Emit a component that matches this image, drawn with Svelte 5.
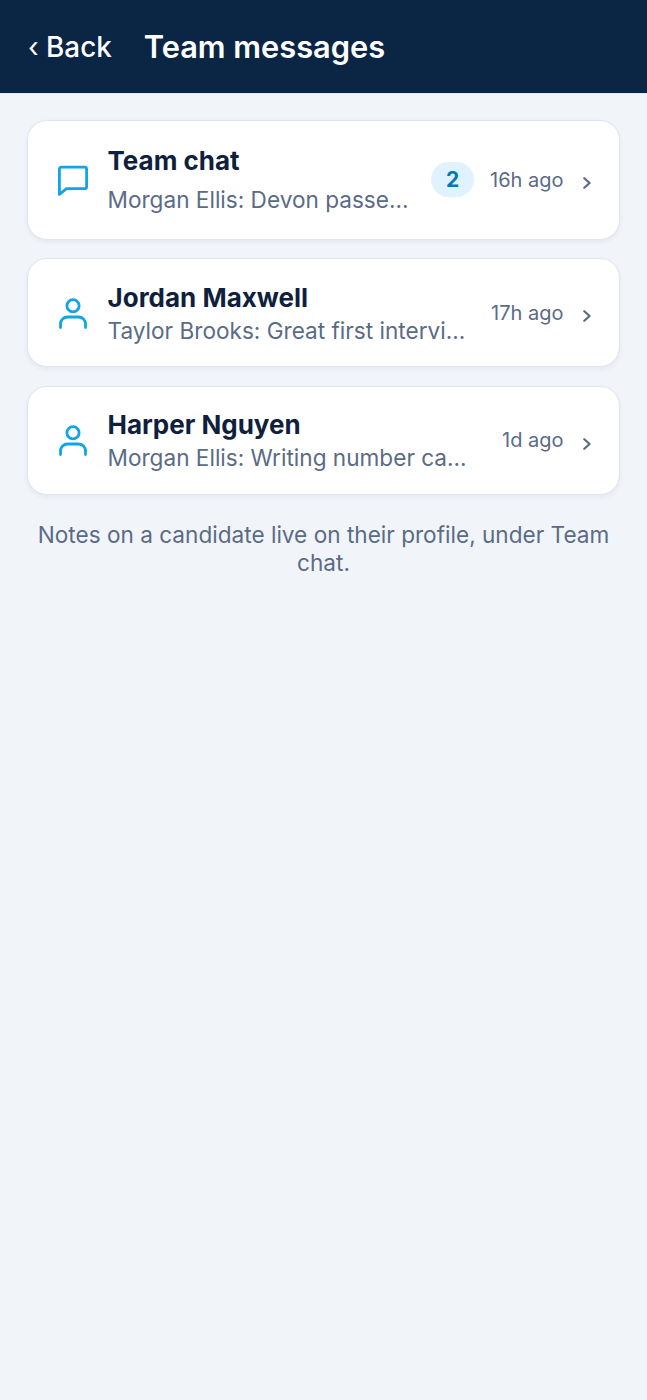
<script>
  const threads = [
    { id: 1, icon: 'chat', name: 'Team chat', preview: 'Morgan Ellis: Devon passed the phone screen', unread: 2, time: '16h ago' },
    { id: 2, icon: 'person', name: 'Jordan Maxwell', preview: 'Taylor Brooks: Great first interview today', unread: 0, time: '17h ago' },
    { id: 3, icon: 'person', name: 'Harper Nguyen', preview: 'Morgan Ellis: Writing number came back high', unread: 0, time: '1d ago' }
  ];
</script>

<div class="screen">
  <header>
    <span class="back"><span class="caret">‹</span> Back</span>
    <h1>Team messages</h1>
  </header>

  <main>
    {#each threads as t (t.id)}
      <div class="card" class:tall={t.unread > 0}>
        <span class="icon">
          {#if t.icon === 'chat'}
            <svg width="32" height="32" viewBox="0 0 32 32" fill="none" stroke="#0ea5e9" stroke-width="2.8" stroke-linejoin="round" stroke-linecap="round">
              <path d="M2.4 5.1a2 2 0 0 1 2-2h23.2a2 2 0 0 1 2 2v17.6a2 2 0 0 1-2 2H9.5l-7.1 5.6z" />
            </svg>
          {:else}
            <svg width="32" height="32" viewBox="0 0 32 32" fill="none" stroke="#0ea5e9" stroke-width="2.8" stroke-linecap="round">
              <circle cx="16" cy="8.8" r="6.1" />
              <path d="M3.5 30.6V27a7 7 0 0 1 7-7h11a7 7 0 0 1 7 7v3.6" />
            </svg>
          {/if}
        </span>
        <div class="body">
          <div class="name">{t.name}</div>
          <div class="preview">{t.preview}</div>
        </div>
        {#if t.unread}<span class="badge">{t.unread}</span>{/if}
        <span class="time">{t.time}</span>
        <svg class="chev" width="8" height="12" viewBox="0 0 8 12" fill="none" stroke="#5b6b86" stroke-width="2.2" stroke-linecap="round" stroke-linejoin="round">
          <path d="M1.3 1.2 6.6 6l-5.3 4.8" />
        </svg>
      </div>
    {/each}
    <p class="note">Notes on a candidate live on their profile, under Team chat.</p>
  </main>
</div>

<style>
  :global(body) {
    margin: 0;
    background: #f1f5fa;
  }

  .screen {
    min-height: 1400px;
    background: #f1f5fa;
    font-family: Inter, "Liberation Sans", sans-serif;
  }

  header {
    display: flex;
    align-items: center;
    gap: 33px;
    height: 94px;
    padding: 0 27px 0 28px;
    box-sizing: border-box;
    background: #0b2545;
    border-bottom: 1px solid #e2e8f0;
    color: #fff;
  }

  .back {
    margin-right: -1px;
    font-size: 27.8px;
    font-weight: 500;
  }

  .caret {
    font-weight: 400;
  }

  h1 {
    margin: 0;
    font-size: 30.8px;
    font-weight: 600;
  }

  main {
    display: flex;
    flex-direction: column;
    gap: 18.3px;
    padding: 26px 27px 0;
  }

  .card {
    display: flex;
    align-items: center;
    height: 109.5px;
    padding: 0 28.5px;
    box-sizing: border-box;
    background: #fff;
    border: 1.5px solid #dfe6f0;
    border-radius: 20px;
    box-shadow: 0 2px 5px rgba(15, 23, 42, 0.06);
  }

  .card.tall {
    height: 119.5px;
  }

  .icon {
    display: flex;
    flex: none;
    width: 32px;
    justify-content: center;
    margin-right: 19px;
  }

  .body {
    flex: 1;
    min-width: 0;
    margin-right: 24px;
    padding-top: 2px;
  }

  .tall .body {
    margin-right: 20px;
    padding-top: 0;
  }

  .name {
    color: #0f1f3d;
    font-size: 26px;
    font-weight: 700;
    line-height: 34px;
  }

  .tall .name {
    margin-bottom: 6px;
  }

  .preview {
    overflow: hidden;
    color: #5b6b86;
    font-size: 22.6px;
    line-height: 32px;
    text-overflow: ellipsis;
    white-space: nowrap;
  }

  .badge {
    flex: none;
    display: flex;
    align-items: center;
    justify-content: center;
    width: 43px;
    height: 35px;
    margin-right: 16px;
    border-radius: 18px;
    background: #e0f2fe;
    color: #0277bd;
    font-size: 21px;
    font-weight: 700;
  }

  .time {
    flex: none;
    color: #5b6b86;
    font-size: 20px;
  }

  .chev {
    flex: none;
    margin: 7px 0 0 19px;
  }

  .note {
    margin: 8px 0 0;
    color: #5b6b86;
    font-size: 22.6px;
    line-height: 28px;
    text-align: center;
  }
</style>
